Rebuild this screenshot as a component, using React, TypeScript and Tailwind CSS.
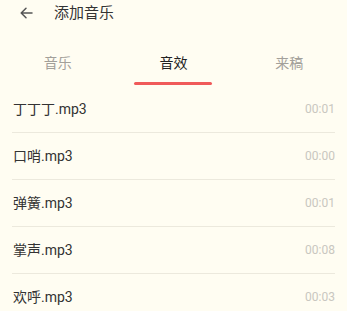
import React, { useState } from 'react';

const tabs = ['音乐', '音效', '来稿'];

const sounds = [
  { name: '丁丁丁.mp3', time: '00:01' },
  { name: '口哨.mp3', time: '00:00' },
  { name: '弹簧.mp3', time: '00:01' },
  { name: '掌声.mp3', time: '00:08' },
  { name: '欢呼.mp3', time: '00:03' },
];

export default function App() {
  const [active, setActive] = useState(1);

  return (
    <div
      className="w-[347px] h-[311px] overflow-hidden bg-[#fffdf2]"
      style={{ fontFamily: 'Roboto, "Noto Sans CJK SC", sans-serif' }}
    >
      {/* Header */}
      <div className="flex items-center h-[25px] pl-[20px]">
        <svg width="13" height="12" viewBox="0 0 13 12" fill="none" stroke="#555" strokeWidth="1.5" strokeLinecap="round" strokeLinejoin="round">
          <path d="M12 6H1.5M6 1.2 1.2 6 6 10.8" />
        </svg>
        <span className="ml-[21px] text-[15px] leading-5 text-[#333]">添加音乐</span>
      </div>

      {/* Tabs */}
      <div className="grid grid-cols-3 pt-[28px] pb-[1px]">
        {tabs.map((t, i) => (
          <button key={t} onClick={() => setActive(i)} className="flex flex-col items-center">
            <span className={`text-[14px] leading-5 ${i === active ? 'text-[#222]' : 'text-[#a3a09a]'}`}>{t}</span>
            <span className={`mt-[9px] h-[3px] w-[78px] rounded-full ${i === active ? 'bg-[#f05a5a]' : 'bg-transparent'}`} />
          </button>
        ))}
      </div>

      {/* List */}
      <div className="px-3">
        {sounds.map((s) => (
          <div key={s.name} className="flex items-center justify-between h-[47px] border-b border-[#ece9dd]">
            <span className="text-[14px] text-[#333] pl-px">{s.name}</span>
            <span className="text-[12px] text-[#c9c7c0]">{s.time}</span>
          </div>
        ))}
      </div>
    </div>
  );
}
